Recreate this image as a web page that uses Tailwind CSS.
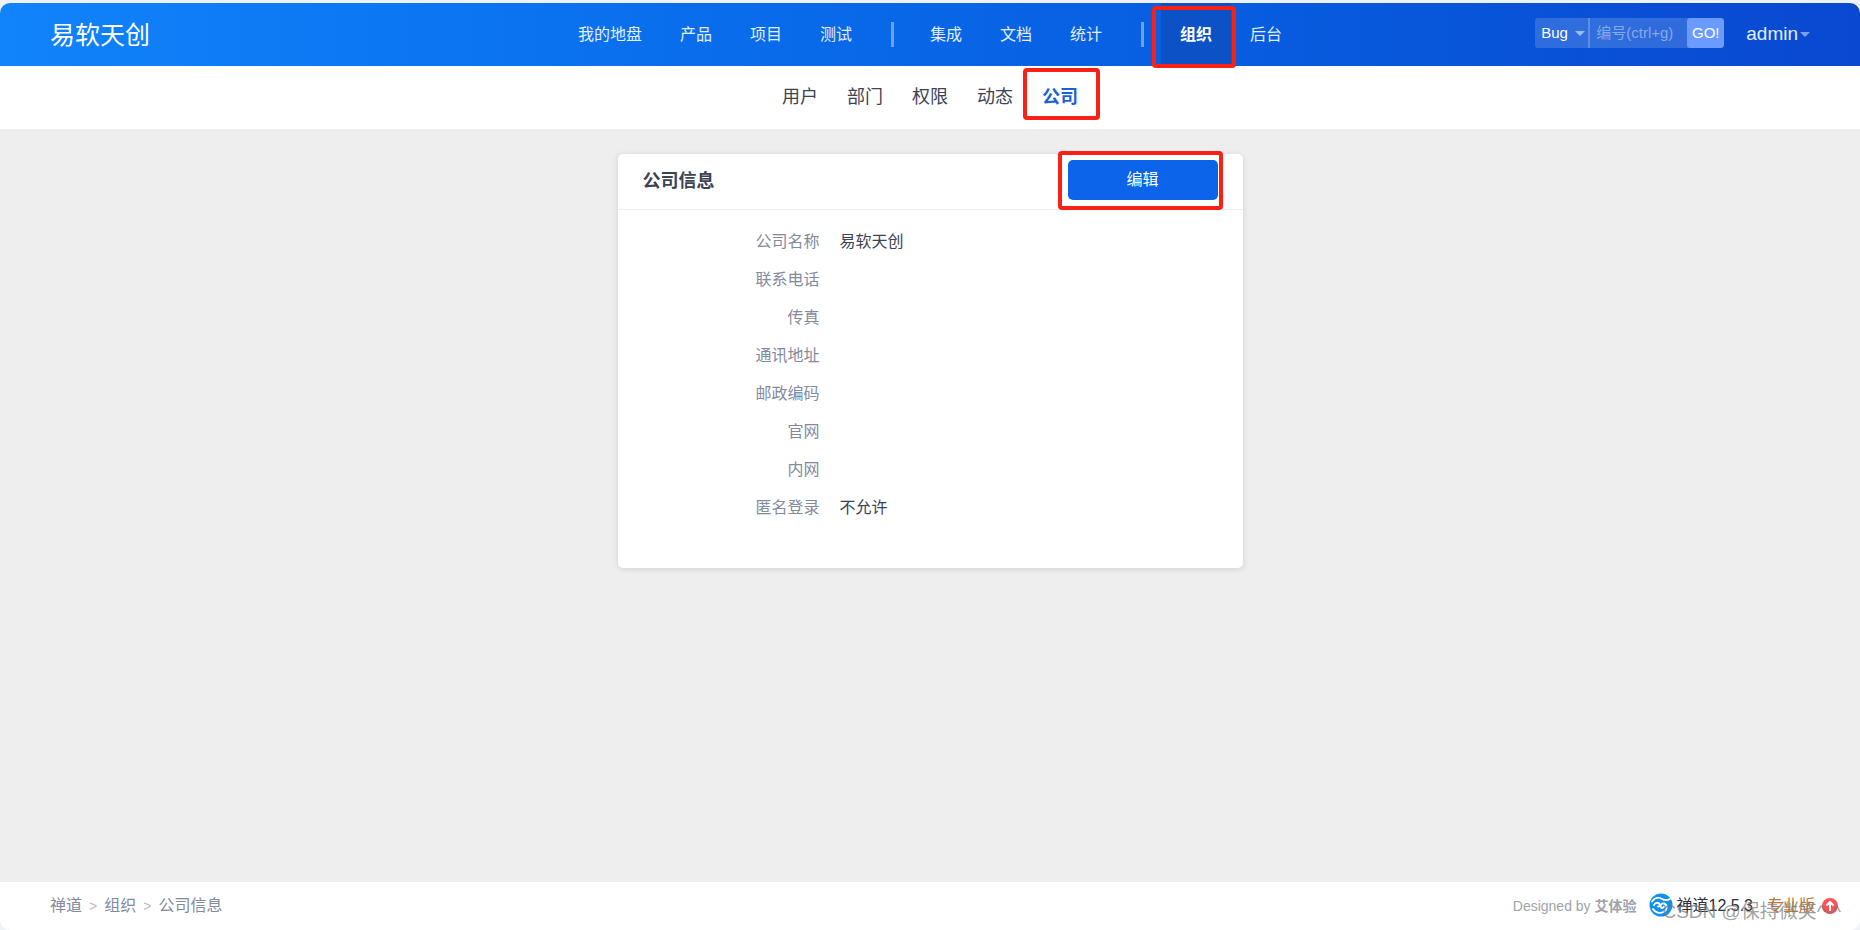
<!DOCTYPE html>
<html lang="zh-CN">
<head>
<meta charset="utf-8">
<title>公司信息 - 禅道</title>
<script src="https://cdn.jsdelivr.net/npm/@tailwindcss/browser@4"></script>
</head>
<body class="bg-[#eff2f6] font-['Liberation_Sans','Noto_Sans_CJK_SC',sans-serif] text-base text-[#3c4353]">
<div class="flex min-h-screen flex-col pt-[3px]">
  <div class="flex flex-1 flex-col overflow-hidden rounded-[10px] bg-[#eee]">
    <header class="grid h-[63px] shrink-0 grid-cols-[1fr_auto_1fr] items-center bg-linear-to-r from-[#1183fb] to-[#0a48d1] px-[50px]">
      <h1 class="text-[25px] leading-8 text-white">易软天创</h1>
      <nav class="flex h-full items-center text-[#e3eeff]">
        <a href="#" class="px-[19px]">我的地盘</a>
        <a href="#" class="px-[19px]">产品</a>
        <a href="#" class="px-[19px]">项目</a>
        <a href="#" class="px-[19px]">测试</a>
        <span class="mr-[17px] ml-5 h-[25px] w-[3px] bg-[#6ba2f6]"></span>
        <a href="#" class="px-[19px]">集成</a>
        <a href="#" class="px-[19px]">文档</a>
        <a href="#" class="px-[19px]">统计</a>
        <span class="mr-[17px] ml-5 h-[25px] w-[3px] bg-[#6ba2f6]"></span>
        <a href="#" class="relative flex h-full items-center bg-[#0c52c6] px-[19px] font-bold text-white">组织
          <span class="absolute top-[3px] -right-[5px] -bottom-[2px] -left-[9px] z-10 rounded-[4px] border-4 border-[#f92116]"></span>
        </a>
        <a href="#" class="px-[19px]">后台</a>
      </nav>
      <div class="flex items-center justify-end">
        <form class="mb-[3px] flex h-[30px] overflow-hidden rounded-[3px] bg-white/16 text-[15px]">
          <div class="relative w-[53px]">
            <select aria-label="搜索类型" class="h-full w-full appearance-none pl-1.5 text-white"><option>Bug</option></select>
            <span class="pointer-events-none absolute top-[13px] right-[3px] border-x-5 border-t-5 border-x-transparent border-t-[#9dbdf5]"></span>
          </div>
          <input aria-label="编号" placeholder="编号(ctrl+g)" class="w-[99px] border-l-2 border-[#5c8ce8] pl-1.5 text-white outline-none placeholder:text-[#85a9ec]">
          <button type="button" class="w-[37px] rounded-[3px] bg-[#6b9bff] text-center text-white">GO!</button>
        </form>
        <button type="button" class="ml-[22px] flex items-center gap-[2px] text-[19px] text-[#e3ecfd]">admin
          <span class="border-x-5 border-t-5 border-x-transparent border-t-[#7ba0ea]"></span>
        </button>
      </div>
    </header>

    <nav class="flex h-[63px] shrink-0 items-center justify-center gap-[29px] bg-white text-[18px]">
      <a href="#">用户</a>
      <a href="#">部门</a>
      <a href="#">权限</a>
      <a href="#">动态</a>
      <a href="#" class="relative font-bold text-[#1b5fd9]">公司
        <span class="absolute -top-4 -right-[22px] -bottom-[9px] -left-[19px] rounded-[4px] border-4 border-[#f92116]"></span>
      </a>
    </nav>

    <main class="flex-1 pt-[25px]">
      <section class="mx-auto w-full max-w-[625px] rounded-[5px] bg-white pb-[41px] shadow-[0_1px_6px_rgba(0,0,0,0.12)]">
        <div class="flex h-14 items-center justify-between border-b border-[#eee] px-[25px]">
          <h2 class="text-[18px] font-bold">公司信息</h2>
          <button type="button" class="relative mb-[3px] h-10 w-[150px] rounded-[5px] bg-[#0c64eb] text-white">编辑
            <span class="absolute -top-[9px] -right-[5px] -bottom-[10px] -left-[10px] rounded-[4px] border-4 border-[#f92116]"></span>
          </button>
        </div>
        <table class="mt-[13px] w-full">
          <tbody>
            <tr class="h-[38px]"><th scope="row" class="w-[212px] pr-[10px] text-right font-normal text-[#838a9d]">公司名称</th><td class="pl-[10px]">易软天创</td></tr>
            <tr class="h-[38px]"><th scope="row" class="pr-[10px] text-right font-normal text-[#838a9d]">联系电话</th><td></td></tr>
            <tr class="h-[38px]"><th scope="row" class="pr-[10px] text-right font-normal text-[#838a9d]">传真</th><td></td></tr>
            <tr class="h-[38px]"><th scope="row" class="pr-[10px] text-right font-normal text-[#838a9d]">通讯地址</th><td></td></tr>
            <tr class="h-[38px]"><th scope="row" class="pr-[10px] text-right font-normal text-[#838a9d]">邮政编码</th><td></td></tr>
            <tr class="h-[38px]"><th scope="row" class="pr-[10px] text-right font-normal text-[#838a9d]">官网</th><td></td></tr>
            <tr class="h-[38px]"><th scope="row" class="pr-[10px] text-right font-normal text-[#838a9d]">内网</th><td></td></tr>
            <tr class="h-[38px]"><th scope="row" class="pr-[10px] text-right font-normal text-[#838a9d]">匿名登录</th><td class="pl-[10px]">不允许</td></tr>
          </tbody>
        </table>
      </section>
    </main>

    <footer class="relative flex h-12 shrink-0 items-center justify-between bg-white pr-[22px] pl-[50px]">
      <nav aria-label="面包屑" class="flex items-center gap-[7px] text-[#838a9d]">
        <a href="#">禅道</a><span class="text-sm text-[#bbb]">&gt;</span>
        <a href="#">组织</a><span class="text-sm text-[#bbb]">&gt;</span>
        <span>公司信息</span>
      </nav>
      <div class="flex items-center">
        <span class="text-sm text-[#a0a3a9]">Designed by <a href="#" class="font-bold">艾体验</a></span>
        <a href="#" class="ml-[13px] flex items-center gap-[3px] text-[#2b2f3a]">
          <svg class="mb-[2px] size-6" viewBox="0 0 24 24" fill="none" aria-hidden="true">
            <circle cx="12" cy="12" r="11.5" fill="#1190ee"/>
            <path d="M3 8.500C6 4.500 10 4 13 6c3 1.800 5.500 1.500 8 0" stroke="#fff" stroke-width="1.800" stroke-linecap="round"/>
            <path d="M5 12c1-2.500 4.500-3 5.500-.8.600 1.500-.3 2.500-1.500 2.300M4 16c2 3.500 7 5 10.500 3 4-2.300 4-7.500.5-8.500-2.600-.6-4.300 2-3 3.800 1 1.200 2.800.7 2.800-.7" stroke="#fff" stroke-width="1.900" stroke-linecap="round"/>
          </svg>
          <span>禅道12.5.3</span>
        </a>
        <a href="#" class="ml-[14px] text-[#b8763a]">专业版</a>
        <svg class="ml-[7px] size-4" viewBox="0 0 16 16" aria-hidden="true">
          <circle cx="8" cy="8" r="8" fill="#fb5257"/>
          <path d="M8 13V4M4.500 7.500 8 4l3.500 3.500" fill="none" stroke="#fff" stroke-width="2"/>
        </svg>
      </div>
      <span class="pointer-events-none absolute right-[19px] bottom-1 text-[19px] leading-7 text-[#777]/70">CSDN @保持微笑^-^</span>
    </footer>
  </div>
</div>
</body>
</html>
